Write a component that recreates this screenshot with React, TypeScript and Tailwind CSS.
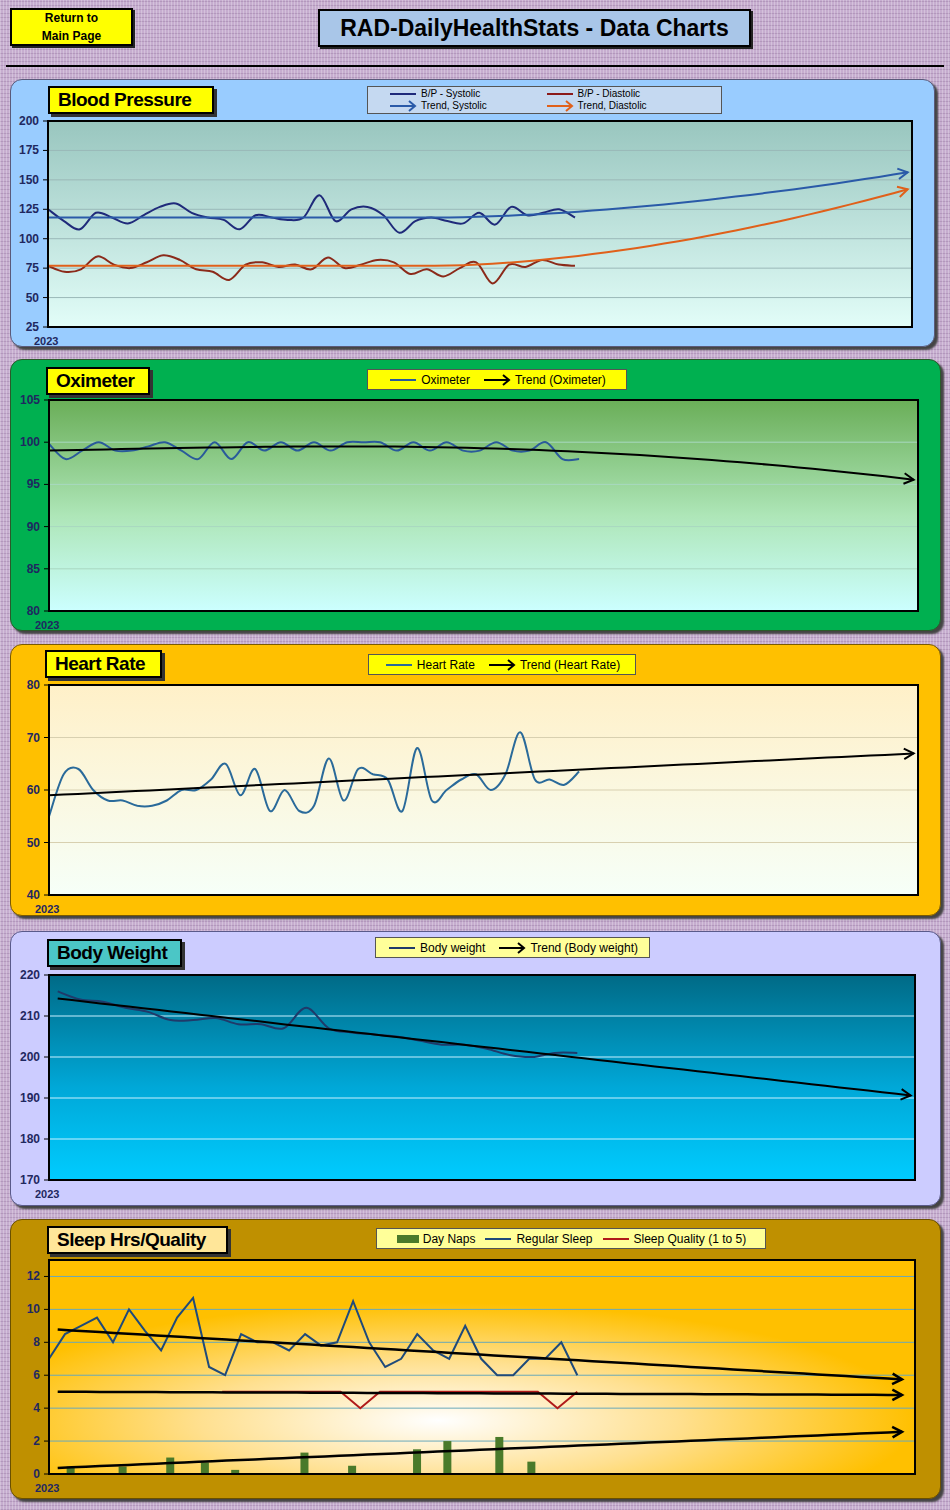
import React from "react";

type Pt = [number, number];

function smooth(pts: Pt[]): string {
  if (pts.length < 2) return "";
  let d = `M${pts[0][0].toFixed(1)},${pts[0][1].toFixed(1)}`;
  for (let i = 0; i < pts.length - 1; i++) {
    const p0 = pts[i - 1] || pts[i];
    const p1 = pts[i];
    const p2 = pts[i + 1];
    const p3 = pts[i + 2] || p2;
    const c1: Pt = [p1[0] + (p2[0] - p0[0]) / 6, p1[1] + (p2[1] - p0[1]) / 6];
    const c2: Pt = [p2[0] - (p3[0] - p1[0]) / 6, p2[1] - (p3[1] - p1[1]) / 6];
    d += ` C${c1[0].toFixed(1)},${c1[1].toFixed(1)} ${c2[0].toFixed(1)},${c2[1].toFixed(1)} ${p2[0].toFixed(1)},${p2[1].toFixed(1)}`;
  }
  return d;
}
function poly(pts: Pt[]): string {
  return pts.map((p, i) => `${i ? "L" : "M"}${p[0].toFixed(1)},${p[1].toFixed(1)}`).join(" ");
}

type ChartCfg = {
  w: number;
  h: number;
  ymin: number;
  ymax: number;
  ticks: number[];
};

function mk(c: ChartCfg) {
  const y = (v: number) => c.h - ((v - c.ymin) / (c.ymax - c.ymin)) * c.h;
  const series = (vals: number[], start = 0, end = 0.61): Pt[] =>
    vals.map((v, i) => [c.w * (start + ((end - start) * i) / (vals.length - 1)), y(v)]);
  const fn = (f: (t: number) => number, t0 = 0, t1 = 0.995, n = 60): Pt[] => {
    const out: Pt[] = [];
    for (let i = 0; i <= n; i++) {
      const t = t0 + ((t1 - t0) * i) / n;
      out.push([c.w * t, y(f(t))]);
    }
    return out;
  };
  return { y, series, fn };
}

function Arrow({ pts, color, width = 2 }: { pts: Pt[]; color: string; width?: number }) {
  const a = pts[pts.length - 2];
  const b = pts[pts.length - 1];
  const ang = Math.atan2(b[1] - a[1], b[0] - a[0]);
  const L = 11;
  const p1: Pt = [b[0] - L * Math.cos(ang - 0.5), b[1] - L * Math.sin(ang - 0.5)];
  const p2: Pt = [b[0] - L * Math.cos(ang + 0.5), b[1] - L * Math.sin(ang + 0.5)];
  return (
    <g>
      <path d={poly(pts)} fill="none" stroke={color} strokeWidth={width} />
      <path d={`M${p1[0]},${p1[1]} L${b[0]},${b[1]} L${p2[0]},${p2[1]}`} fill="none" stroke={color} strokeWidth={width} />
    </g>
  );
}

function Plot({
  c,
  px,
  gradient,
  gridColor,
  children,
  id,
}: {
  c: ChartCfg;
  px: number;
  gradient: React.ReactNode;
  gridColor: string;
  children: React.ReactNode;
  id: string;
}) {
  const { y } = mk(c);
  return (
    <svg width={px + c.w + 4} height={c.h + 22} style={{ overflow: "visible", display: "block" }}>
      <defs>{gradient}</defs>
      <g transform={`translate(${px},0)`}>
        <rect x={0} y={0} width={c.w} height={c.h} fill={`url(#${id})`} />
        {c.ticks.map((t) => (
          <line key={t} x1={0} x2={c.w} y1={y(t)} y2={y(t)} stroke={gridColor} strokeWidth={1} />
        ))}
        {children}
        <rect x={0} y={0} width={c.w} height={c.h} fill="none" stroke="#000" strokeWidth={2} />
        {c.ticks.map((t) => (
          <g key={"t" + t}>
            <line x1={-5} x2={0} y1={y(t)} y2={y(t)} stroke="#000" strokeWidth={1} />
            <text
              x={-9}
              y={y(t) + 4}
              textAnchor="end"
              fontSize={12}
              fontWeight={700}
              fill="#1f2860"
              fontFamily="'Liberation Sans Narrow', 'Liberation Sans', Arial, sans-serif"
            >
              {t}
            </text>
          </g>
        ))}
        <text x={-14} y={c.h + 18} fontSize={11} fontWeight={700} fill="#1f2860" fontFamily="'Liberation Sans', Arial, sans-serif">
          2023
        </text>
      </g>
    </svg>
  );
}

const narrow = { fontFamily: "'Liberation Sans Narrow', 'Arial Narrow', 'Liberation Sans', Arial, sans-serif" };

function Title({ text, bg, w }: { text: string; bg: string; w: number }) {
  return (
    <div
      className="h-[28px] border-2 border-black flex items-center px-[8px] text-[19px] font-bold text-black whitespace-nowrap overflow-hidden tracking-[-0.5px] shadow-[3px_3px_0_#333]"
      style={{ backgroundColor: bg, width: w, ...narrow }}
    >
      {text}
    </div>
  );
}

function LegItem({ color, label, kind = "line" }: { color: string; label: string; kind?: "line" | "arrow" | "bar" }) {
  return (
    <span className="flex items-center gap-[3px] whitespace-nowrap">
      <svg width={kind === "bar" ? 24 : 30} height={12}>
        {kind === "line" && <line x1={2} x2={28} y1={6} y2={6} stroke={color} strokeWidth={2} />}
        {kind === "arrow" && (
          <g>
            <line x1={2} x2={27} y1={6} y2={6} stroke={color} strokeWidth={2} />
            <path d="M21,1 L27,6 L21,11" fill="none" stroke={color} strokeWidth={2} />
          </g>
        )}
        {kind === "bar" && <rect x={1} y={2} width={22} height={8} fill={color} />}
      </svg>
      {label}
    </span>
  );
}

const font = { fontFamily: "'Liberation Sans', Arial, sans-serif" };

export default function App() {
  const bp: ChartCfg = { w: 864, h: 206, ymin: 25, ymax: 200, ticks: [25, 50, 75, 100, 125, 150, 175, 200] };
  const bpm = mk(bp);
  const sys = [125, 115, 108, 122, 118, 113, 120, 127, 130, 122, 118, 116, 108, 120, 118, 116, 118, 137, 115, 125, 127, 120, 105, 115, 118, 115, 113, 122, 112, 127, 120, 122, 125, 118];
  const dia = [77, 72, 74, 85, 78, 75, 80, 86, 82, 74, 72, 65, 78, 80, 76, 78, 74, 84, 75, 78, 82, 80, 70, 74, 68, 75, 80, 62, 78, 76, 82, 78, 77];
  const curve = (t: number) => Math.max(0, (t - 0.45) / 0.55) ** 1.7;

  const ox: ChartCfg = { w: 869, h: 211, ymin: 80, ymax: 105, ticks: [80, 85, 90, 95, 100, 105] };
  const oxm = mk(ox);
  const oxv = [99.8, 98, 99, 100, 99, 99, 99.5, 100, 99, 98, 100, 98, 100, 99, 100, 99, 100, 99, 100, 100, 100, 99, 100, 99, 100, 99, 99, 100, 99, 99, 100, 98, 98];

  const hr: ChartCfg = { w: 869, h: 210, ymin: 40, ymax: 80, ticks: [40, 50, 60, 70, 80] };
  const hrm = mk(hr);
  const hrv = [55, 63, 64, 60, 58, 58, 57, 57, 58, 60, 60, 62, 65, 59, 64, 56, 60, 56, 57, 66, 58, 64, 63, 62, 56, 68, 58, 60, 62, 63, 60, 63, 71, 62, 62, 61, 63.5];

  const bw: ChartCfg = { w: 866, h: 205, ymin: 170, ymax: 220, ticks: [170, 180, 190, 200, 210, 220] };
  const bwm = mk(bw);
  const bwv = [216, 214, 213.5, 212, 211, 209, 209, 209.5, 208, 208, 207, 212, 207, 206, 205.5, 205, 204, 203, 203, 202, 200.5, 200, 201, 201];

  const sl: ChartCfg = { w: 866, h: 214, ymin: 0, ymax: 13, ticks: [0, 2, 4, 6, 8, 10, 12] };
  const slm = mk(sl);
  const slv = [7, 8.5, 9, 9.5, 8, 10, 8.7, 7.5, 9.5, 10.7, 6.5, 6, 8.5, 8, 8, 7.5, 8.5, 7.8, 8, 10.5, 8, 6.5, 7, 8.5, 7.5, 7, 9, 7, 6, 6, 7, 7, 8, 6];
  const qual = [5, 5, 5, 5, 5, 5, 5, 4, 5, 5, 5, 5, 5, 5, 5, 5, 5, 4, 5];
  const naps: [number, number][] = [
    [0.025, 0.45], [0.085, 0.45], [0.14, 1], [0.18, 0.7], [0.215, 0.25], [0.295, 1.3],
    [0.35, 0.5], [0.425, 1.5], [0.46, 2], [0.52, 2.25], [0.557, 0.75],
  ];

  return (
    <div
      className="w-[950px] h-[1510px] relative overflow-hidden"
      style={{
        ...font,
        backgroundColor: "#c6adcf",
        backgroundImage:
          "repeating-linear-gradient(90deg, rgba(255,255,255,0.25) 0 1px, transparent 1px 3px), repeating-linear-gradient(0deg, rgba(90,50,100,0.18) 0 1px, transparent 1px 4px)",
      }}
    >
      <div className="flex items-start h-[67px] border-b-2 border-black mx-[6px] pt-[8px]">
        <div className="ml-[4px] w-[123px] h-[38px] bg-[#ffff00] border-2 border-black shadow-[2px_2px_0_#222] flex flex-col items-center justify-center text-[12px] font-bold leading-[18px] text-black" style={narrow}>
          <span>Return to</span>
          <span>Main Page</span>
        </div>
        <div className="ml-[185px] mt-[1px] w-[433px] h-[38px] bg-[#a9c6e8] border-2 border-black shadow-[2px_2px_0_#222] flex items-center justify-center text-[23px] font-bold text-black" style={narrow}>
          RAD-DailyHealthStats - Data Charts
        </div>
      </div>

      <div className="pl-[10px] pt-[12px] flex flex-col">
        <div className="w-[925px] h-[268px] rounded-[12px] bg-[#99ccff] border border-[#5a5a7a] shadow-[3px_3px_2px_#444]">
          <div className="flex items-start h-[41px] pt-[6px]">
            <div className="ml-[37px]"><Title text="Blood Pressure" bg="#ffff00" w={166} /></div>
            <div className="ml-[153px] w-[355px] h-[28px] bg-[#c5d9f1] border border-[#555] grid grid-cols-2 text-[10px] leading-[12px] text-black px-[20px] py-[1px]" style={narrow}>
              <LegItem color="#1f2a7a" label="B/P - Systolic" />
              <LegItem color="#8b1a1a" label="B/P - Diastolic" />
              <LegItem color="#2a5aa8" label="Trend, Systolic" kind="arrow" />
              <LegItem color="#e0601a" label="Trend, Diastolic" kind="arrow" />
            </div>
          </div>
          <Plot
            c={bp}
            px={37}
            id="gbp"
            gridColor="#9ab8b8"
            gradient={
              <linearGradient id="gbp" x1="0" y1="0" x2="0" y2="1">
                <stop offset="0" stopColor="#99c6bf" />
                <stop offset="1" stopColor="#e2fdf8" />
              </linearGradient>
            }
          >
            <path d={smooth(bpm.series(sys, 0, 0.61))} fill="none" stroke="#1f2a7a" strokeWidth={2} />
            <path d={smooth(bpm.series(dia, 0, 0.61))} fill="none" stroke="#8b2a1a" strokeWidth={2} />
            <Arrow pts={bpm.fn((t) => 118 + 39 * curve(t))} color="#2a5aa8" />
            <Arrow pts={bpm.fn((t) => 77 + 66 * curve(t))} color="#e0601a" />
          </Plot>
        </div>

        <div className="mt-[12px] w-[931px] h-[272px] rounded-[12px] bg-[#00b050] border border-[#2a5a2a] shadow-[3px_3px_2px_#444]">
          <div className="flex items-start h-[40px] pt-[7px]">
            <div className="ml-[35px]"><Title text="Oximeter" bg="#ffff00" w={104} /></div>
            <div className="ml-[217px] mt-[2px] w-[260px] h-[21px] bg-[#ffff00] border border-[#555] flex items-center justify-center gap-[12px] text-[12px] text-black" style={narrow}>
              <LegItem color="#2a5a9a" label="Oximeter" />
              <LegItem color="#000" label="Trend (Oximeter)" kind="arrow" />
            </div>
          </div>
          <Plot
            c={ox}
            px={38}
            id="gox"
            gridColor="#a8d8c0"
            gradient={
              <linearGradient id="gox" x1="0" y1="0" x2="0" y2="1">
                <stop offset="0" stopColor="#6aae58" />
                <stop offset="0.55" stopColor="#aee6b8" />
                <stop offset="1" stopColor="#ccffff" />
              </linearGradient>
            }
          >
            <path d={smooth(oxm.series(oxv, 0, 0.61))} fill="none" stroke="#2a5a9a" strokeWidth={2} />
            <Arrow pts={oxm.fn((t) => 99 + 0.5 * Math.sin(Math.min(t, 0.35) / 0.35 * Math.PI / 2) - (t > 0.35 ? 4 * ((t - 0.35) / 0.65) ** 2 : 0))} color="#000" />
          </Plot>
        </div>

        <div className="mt-[13px] w-[931px] h-[272px] rounded-[12px] bg-[#ffc000] border border-[#7a5a00] shadow-[3px_3px_2px_#444]">
          <div className="flex items-start h-[40px] pt-[5px]">
            <div className="ml-[34px]"><Title text="Heart Rate" bg="#ffff00" w={117} /></div>
            <div className="ml-[206px] mt-[4px] w-[268px] h-[21px] bg-[#ffff00] border border-[#555] flex items-center justify-center gap-[12px] text-[12px] text-black" style={narrow}>
              <LegItem color="#2a6a9a" label="Heart Rate" />
              <LegItem color="#000" label="Trend (Heart Rate)" kind="arrow" />
            </div>
          </div>
          <Plot
            c={hr}
            px={38}
            id="ghr"
            gridColor="#d8d0b0"
            gradient={
              <linearGradient id="ghr" x1="0" y1="0" x2="0" y2="1">
                <stop offset="0" stopColor="#fff0c8" />
                <stop offset="1" stopColor="#f6fff8" />
              </linearGradient>
            }
          >
            <path d={smooth(hrm.series(hrv, 0, 0.61))} fill="none" stroke="#2a6a9a" strokeWidth={2} />
            <Arrow pts={hrm.fn((t) => 59 + 8 * t)} color="#000" />
          </Plot>
        </div>

        <div className="mt-[15px] w-[931px] h-[275px] rounded-[12px] bg-[#ccccff] border border-[#5a5a8a] shadow-[3px_3px_2px_#444]">
          <div className="flex items-start h-[43px] pt-[7px]">
            <div className="ml-[36px]"><Title text="Body Weight" bg="#4bc6c6" w={135} /></div>
            <div className="ml-[193px] mt-[-2px] w-[275px] h-[21px] bg-[#ffff99] border border-[#555] flex items-center justify-center gap-[12px] text-[12px] text-black" style={narrow}>
              <LegItem color="#1f3a6a" label="Body weight" />
              <LegItem color="#000" label="Trend (Body weight)" kind="arrow" />
            </div>
          </div>
          <Plot
            c={bw}
            px={38}
            id="gbw"
            gridColor="#c8f0ff"
            gradient={
              <linearGradient id="gbw" x1="0" y1="0" x2="0" y2="1">
                <stop offset="0" stopColor="#006a86" />
                <stop offset="0.55" stopColor="#00a8d8" />
                <stop offset="1" stopColor="#00ccff" />
              </linearGradient>
            }
          >
            <path d={smooth(bwm.series(bwv, 0.01, 0.61))} fill="none" stroke="#1f3a6a" strokeWidth={2} />
            <Arrow pts={bwm.fn((t) => 214.5 - 24 * t, 0.01, 0.995)} color="#000" />
          </Plot>
        </div>

        <div className="mt-[13px] w-[931px] h-[280px] rounded-[12px] bg-[#bf9000] border border-[#6a5000] shadow-[3px_3px_2px_#444]">
          <div className="flex items-start h-[40px] pt-[6px]">
            <div className="ml-[36px]"><Title text="Sleep Hrs/Quality" bg="#ffe699" w={181} /></div>
            <div className="ml-[148px] mt-[2px] w-[390px] h-[21px] bg-[#ffff99] border border-[#555] flex items-center justify-center gap-[8px] text-[12px] text-black" style={narrow}>
              <LegItem color="#4a7a2a" label="Day Naps" kind="bar" />
              <LegItem color="#1f4a7a" label="Regular Sleep" />
              <LegItem color="#b01a1a" label="Sleep Quality (1 to 5)" />
            </div>
          </div>
          <Plot
            c={sl}
            px={38}
            id="gsl"
            gridColor="#6aa8b8"
            gradient={
              <radialGradient id="gsl" cx="0.45" cy="0.75" r="0.55">
                <stop offset="0" stopColor="#ffffff" />
                <stop offset="0.5" stopColor="#ffe090" />
                <stop offset="1" stopColor="#ffc000" />
              </radialGradient>
            }
          >
            {naps.map(([t, v], i) => (
              <rect key={i} x={sl.w * t - 4} y={slm.y(v)} width={8} height={sl.h - slm.y(v)} fill="#4a7a2a" />
            ))}
            <path d={poly(slm.series(qual, 0.2, 0.61))} fill="none" stroke="#b01a1a" strokeWidth={2} />
            <path d={poly(slm.series(slv, 0, 0.61))} fill="none" stroke="#1f4a7a" strokeWidth={2} />
            <Arrow pts={slm.fn((t) => 8.8 - 3.1 * t, 0.01, 0.985)} color="#000" width={2.5} />
            <Arrow pts={slm.fn((t) => 5 - 0.2 * t, 0.01, 0.985)} color="#000" width={2.5} />
            <Arrow pts={slm.fn((t) => 0.35 + 2.25 * t, 0.01, 0.985)} color="#000" width={2.5} />
          </Plot>
        </div>
      </div>
    </div>
  );
}
